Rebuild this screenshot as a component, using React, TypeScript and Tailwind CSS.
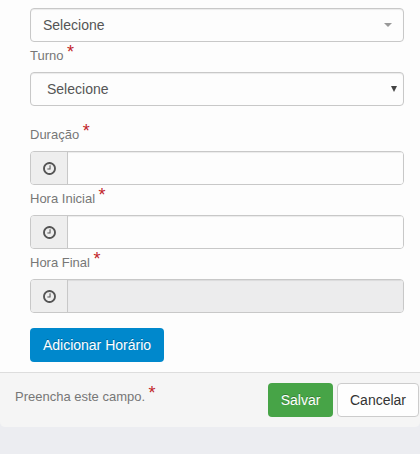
import type { ReactNode } from "react";

function Required() {
  return (
    <span className="relative -top-[3px] ml-[3.5px] text-[18px] leading-none text-[#c21f2b]">*</span>
  );
}

function Label({ children }: { children: ReactNode }) {
  return (
    <label className="flex h-[30px] items-start pt-1 text-[13px] leading-5 text-[#777]">
      {children}
      <Required />
    </label>
  );
}

function ClockIcon() {
  return (
    <svg className="h-[15px] w-[13px]" viewBox="0 0 1536 1792" fill="currentColor" aria-hidden="true">
      <path d="M896 544v448q0 14-9 23t-23 9h-320q-14 0-23-9t-9-23v-64q0-14 9-23t23-9h224v-352q0-14 9-23t23-9h64q14 0 23 9t9 23zM1312 896q0-148-73-273t-198-198-273-73-273 73-198 198-73 273 73 273 198 198 273 73 273-73 198-198 73-273zM1536 896q0 209-103 385.5t-279.5 279.5-385.5 103-385.5-103-279.5-279.5-103-385.5 103-385.5 279.5-279.5 385.5-103 385.5 103 279.5 279.5 103 385.5z" />
    </svg>
  );
}

function TimeField({ name, disabled = false }: { name: string; disabled?: boolean }) {
  return (
    <div className="flex h-[34px] w-full overflow-hidden rounded border border-[#c8c8c8]">
      <span className="flex w-[37px] shrink-0 items-center justify-center border-r border-[#c8c8c8] bg-[#eee] text-[#555]">
        <ClockIcon />
      </span>
      <input
        aria-label={name}
        disabled={disabled}
        className="min-w-0 flex-1 bg-[#fdfdfd] px-3 text-sm shadow-[inset_0_1px_1px_rgba(0,0,0,0.075)] outline-none disabled:bg-[#ececed]"
      />
    </div>
  );
}

export default function App() {
  return (
    <div className="h-[454px] w-[420px] overflow-hidden bg-[#ecedf1] font-['Liberation_Sans',Arial,sans-serif]">
      <main className="h-[372px] bg-[#fdfdfd] pt-2 pr-4 pl-[30px]">
        <div className="flex h-[34px] items-center justify-between rounded border border-[#c8c8c8] pr-[11px] pl-3 text-sm text-[#555] shadow-[inset_0_1px_1px_rgba(0,0,0,0.075)]">
          <span>Selecione</span>
          <span className="border-x-4 border-t-4 border-x-transparent border-t-[#999]" />
        </div>
        <Label>Turno</Label>
        <div className="flex h-[34px] items-center justify-between rounded border border-[#c8c8c8] pr-1.5 pl-4 text-sm text-[#555] shadow-[inset_0_1px_1px_rgba(0,0,0,0.075)]">
          <span>Selecione</span>
          <span className="border-x-[3px] border-t-[6px] border-x-transparent border-t-[#444]" />
        </div>
        <div className="mt-[15px]">
          <Label>Duração</Label>
          <TimeField name="Duração" />
        </div>
        <Label>Hora Inicial</Label>
        <TimeField name="Hora Inicial" />
        <Label>Hora Final</Label>
        <TimeField name="Hora Final" disabled />
        <button className="mt-[15px] h-[34px] w-[134px] rounded bg-[#0088cc] text-sm whitespace-nowrap text-white [text-shadow:0_-1px_0_rgba(0,0,0,0.25)]">
          Adicionar Horário
        </button>
      </main>
      <footer className="flex h-[55px] items-start rounded-b-[5px] border-t border-[#ddd] bg-[#f5f5f5] pt-[10px] pl-[15px]">
        <span className="flex h-[30px] w-[253px] items-start pt-1 text-[13px] leading-5 text-[#777]">
          Preencha este campo.
          <Required />
        </span>
        <button className="h-[34px] w-[65px] rounded bg-[#47a447] text-sm text-white [text-shadow:0_-1px_0_rgba(0,0,0,0.25)]">
          Salvar
        </button>
        <button className="ml-1 h-[34px] w-[82px] rounded border border-[#ccc] bg-[#fefefe] text-sm text-[#333]">
          Cancelar
        </button>
      </footer>
    </div>
  );
}
